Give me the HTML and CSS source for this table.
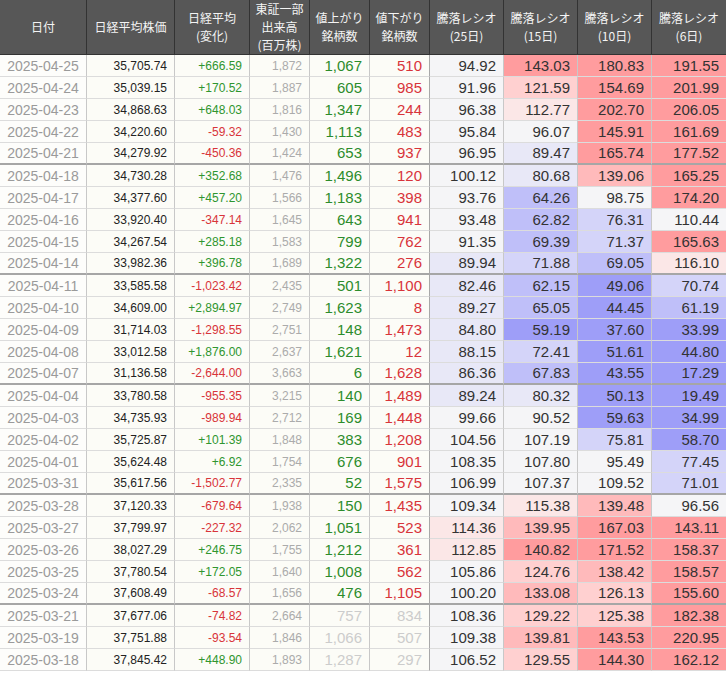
FILE: index.html
```html
<!DOCTYPE html>
<html lang="ja">
<head>
<meta charset="utf-8">
<title>騰落レシオ</title>
<link rel="stylesheet" href="styles.css">
</head>
<body>
<table class="ratio-table">
  <colgroup>
    <col class="c-date"><col class="c-price"><col class="c-chg"><col class="c-vol"><col class="c-adv"><col class="c-dec">
    <col class="c-r"><col class="c-r"><col class="c-r"><col class="c-r">
  </colgroup>
  <thead>
    <tr>
      <th>日付</th>
      <th>日経平均株価</th>
      <th>日経平均<br>(変化)</th>
      <th>東証一部<br>出来高<br>(百万株)</th>
      <th>値上がり<br>銘柄数</th>
      <th>値下がり<br>銘柄数</th>
      <th>騰落レシオ<br>(25日)</th>
      <th>騰落レシオ<br>(15日)</th>
      <th>騰落レシオ<br>(10日)</th>
      <th>騰落レシオ<br>(6日)</th>
    </tr>
  </thead>
  <tbody id="rows"></tbody>
</table>
<script src="script.js"></script>
</body>
</html>
```

FILE: styles.css
```css
html, body {
  margin: 0;
  padding: 0;
  background: #ffffff;
}

.ratio-table {
  border-collapse: separate;
  border-spacing: 0;
  table-layout: fixed;
  width: 726px;
  font-family: "Liberation Sans", "Noto Sans CJK JP", sans-serif;
}

.c-date { width: 87px; }
.c-price { width: 88px; }
.c-chg { width: 75px; }
.c-vol { width: 60px; }
.c-adv { width: 60px; }
.c-dec { width: 60px; }
.c-r { width: 74px; }

.ratio-table th {
  box-sizing: border-box;
  height: 55px;
  padding: 0;
  background: #575757;
  color: #f4f4f4;
  font-family: "Noto Sans CJK JP", "Liberation Sans", sans-serif;
  font-weight: normal;
  font-size: 12px;
  line-height: 18px;
  text-align: center;
  vertical-align: middle;
  border-right: 1px solid #333333;
  border-bottom: 1px solid #333333;
}

.ratio-table th:last-child {
  border-right: none;
}

.ratio-table td {
  box-sizing: border-box;
  height: 22px;
  padding: 0 7px 0 0;
  text-align: right;
  vertical-align: middle;
  white-space: nowrap;
  line-height: 20px;
  background: #fcfcf7;
  border-right: 1px solid #c8c8c8;
  border-bottom: 1px solid #dcdcdc;
}

.ratio-table td:last-child {
  border-right: none;
}

.ratio-table tr.week-end td {
  border-bottom: 2px solid #a6a6a6;
}

td.date {
  text-align: center;
  padding: 0;
  font-size: 14px;
  color: #9a9a9a;
  background: #fdfdfb;
}

td.price {
  font-size: 12px;
  color: #222222;
}

td.chg {
  font-size: 12px;
}

td.chg.up { color: #2f962f; }
td.chg.down { color: #d8343a; }

td.vol {
  font-size: 12px;
  color: #ababab;
}

td.adv {
  font-size: 15px;
  color: #2c8c2c;
}

td.dec {
  font-size: 15px;
  color: #d8343a;
  border-right-color: #a8a8a8;
}

td.adv.faded, td.dec.faded {
  color: #cccccc;
}

td.ratio {
  font-size: 15px;
  color: #333333;
  background: #f5f5f7;
}

td.ratio.r4 { background: #ff9c9e; }
td.ratio.r3 { background: #ffbabb; }
td.ratio.r2 { background: #ffd0d0; }
td.ratio.r1 { background: #fbe7e7; }
td.ratio.n0 { background: #f5f5f7; }
td.ratio.b1 { background: #e8e8f7; }
td.ratio.b2 { background: #d4d4f9; }
td.ratio.b3 { background: #bfbff9; }
td.ratio.b4 { background: #9e9ef8; }
```

FILE: script.js
```js
var data = [
  ["2025-04-25","35,705.74","+666.59","1,872","1,067","510","94.92","143.03","180.83","191.55",0],
  ["2025-04-24","35,039.15","+170.52","1,887","605","985","91.96","121.59","154.69","201.99",0],
  ["2025-04-23","34,868.63","+648.03","1,816","1,347","244","96.38","112.77","202.70","206.05",0],
  ["2025-04-22","34,220.60","-59.32","1,430","1,113","483","95.84","96.07","145.91","161.69",0],
  ["2025-04-21","34,279.92","-450.36","1,424","653","937","96.95","89.47","165.74","177.52",1],
  ["2025-04-18","34,730.28","+352.68","1,476","1,496","120","100.12","80.68","139.06","165.25",0],
  ["2025-04-17","34,377.60","+457.20","1,566","1,183","398","93.76","64.26","98.75","174.20",0],
  ["2025-04-16","33,920.40","-347.14","1,645","643","941","93.48","62.82","76.31","110.44",0],
  ["2025-04-15","34,267.54","+285.18","1,583","799","762","91.35","69.39","71.37","165.63",0],
  ["2025-04-14","33,982.36","+396.78","1,689","1,322","276","89.94","71.88","69.05","116.10",1],
  ["2025-04-11","33,585.58","-1,023.42","2,435","501","1,100","82.46","62.15","49.06","70.74",0],
  ["2025-04-10","34,609.00","+2,894.97","2,749","1,623","8","89.27","65.05","44.45","61.19",0],
  ["2025-04-09","31,714.03","-1,298.55","2,751","148","1,473","84.80","59.19","37.60","33.99",0],
  ["2025-04-08","33,012.58","+1,876.00","2,637","1,621","12","88.15","72.41","51.61","44.80",0],
  ["2025-04-07","31,136.58","-2,644.00","3,663","6","1,628","86.36","67.83","43.55","17.29",1],
  ["2025-04-04","33,780.58","-955.35","3,215","140","1,489","89.24","80.32","50.13","19.49",0],
  ["2025-04-03","34,735.93","-989.94","2,712","169","1,448","99.66","90.52","59.63","34.99",0],
  ["2025-04-02","35,725.87","+101.39","1,848","383","1,208","104.56","107.19","75.81","58.70",0],
  ["2025-04-01","35,624.48","+6.92","1,754","676","901","108.35","107.80","95.49","77.45",0],
  ["2025-03-31","35,617.56","-1,502.77","2,335","52","1,575","106.99","107.37","109.52","71.01",1],
  ["2025-03-28","37,120.33","-679.64","1,938","150","1,435","109.34","115.38","139.48","96.56",0],
  ["2025-03-27","37,799.97","-227.32","2,062","1,051","523","114.36","139.95","167.03","143.11",0],
  ["2025-03-26","38,027.29","+246.75","1,755","1,212","361","112.85","140.82","171.52","158.37",0],
  ["2025-03-25","37,780.54","+172.05","1,640","1,008","562","105.86","124.76","138.42","158.57",0],
  ["2025-03-24","37,608.49","-68.57","1,656","476","1,105","100.20","133.08","126.13","155.60",1],
  ["2025-03-21","37,677.06","-74.82","2,664","757","834","108.36","129.22","125.38","182.38",2],
  ["2025-03-19","37,751.88","-93.54","1,846","1,066","507","109.38","139.81","143.53","220.95",2],
  ["2025-03-18","37,845.42","+448.90","1,893","1,287","297","106.52","129.55","144.30","162.12",2]
];

function heat(v) {
  if (v >= 140) return "r4";
  if (v >= 130) return "r3";
  if (v >= 120) return "r2";
  if (v >= 111) return "r1";
  if (v >= 90) return "n0";
  if (v >= 80) return "b1";
  if (v >= 70) return "b2";
  if (v >= 60) return "b3";
  return "b4";
}

function cell(tr, cls, text) {
  var td = document.createElement("td");
  td.className = cls;
  td.textContent = text;
  tr.appendChild(td);
}

var body = document.getElementById("rows");
data.forEach(function (r) {
  var tr = document.createElement("tr");
  if (r[10] === 1) tr.className = "week-end";
  var faded = r[10] === 2 ? " faded" : "";
  cell(tr, "date", r[0]);
  cell(tr, "price", r[1]);
  cell(tr, "chg " + (r[2].charAt(0) === "-" ? "down" : "up"), r[2]);
  cell(tr, "vol", r[3]);
  cell(tr, "adv" + faded, r[4]);
  cell(tr, "dec" + faded, r[5]);
  for (var i = 6; i <= 9; i++) {
    cell(tr, "ratio " + heat(parseFloat(r[i])), r[i]);
  }
  body.appendChild(tr);
});
```
